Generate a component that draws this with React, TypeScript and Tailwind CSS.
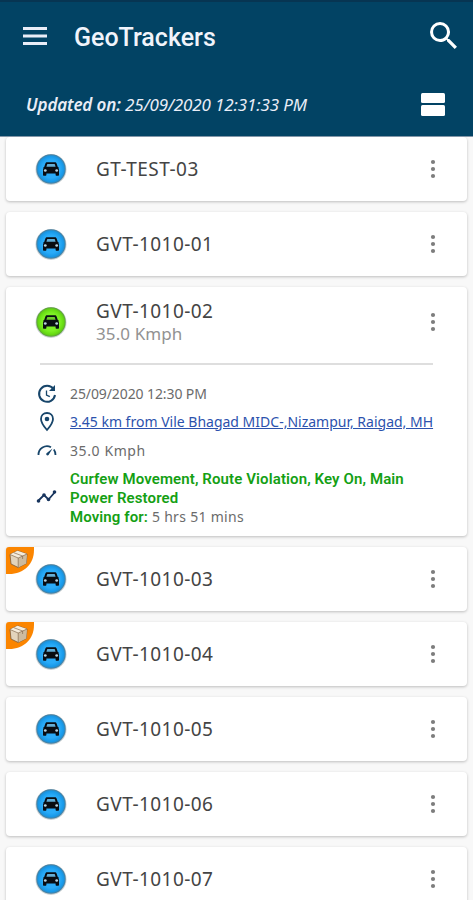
import React from 'react';

interface Vehicle {
    name: string;
    parcel?: boolean;
}

const firstVehicles: Vehicle[] = [
    { name: 'GT-TEST-03' },
    { name: 'GVT-1010-01' },
];

const lastVehicles: Vehicle[] = [
    { name: 'GVT-1010-03', parcel: true },
    { name: 'GVT-1010-04', parcel: true },
    { name: 'GVT-1010-05' },
    { name: 'GVT-1010-06' },
    { name: 'GVT-1010-07' },
];

// Round vehicle marker: green while moving, blue otherwise
const CarBadge: React.FC<{ moving?: boolean }> = ({ moving }) => {
    const id = moving ? 'moving' : 'stopped';
    return (
        <svg viewBox="0 0 32 32" className="h-8 w-8 shrink-0">
            <defs>
                <radialGradient id={id}>
                    <stop offset="0.6" stopColor={moving ? '#7df024' : '#2aabf8'} />
                    <stop offset="0.86" stopColor={moving ? '#65d911' : '#1798e8'} />
                    <stop offset="1" stopColor={moving ? '#5c9c3c' : '#487d9b'} />
                </radialGradient>
            </defs>
            <circle cx="16" cy="16.4" r="15.5" fill="#7d8b90" opacity="0.4" />
            <circle cx="16" cy="16" r="14.7" fill={`url(#${id})`} />
            <path
                d="M12.2 9.3h7.6c1 0 1.5.4 1.8 1.3l1.2 3.3.8.3v1.3c.3.4.4.9.4 1.5v4.8c0 .6-.4 1-1 1h-1.4c-.6 0-1-.4-1-1v-1.2h-9.2v1.2c0 .6-.4 1-1 1H9c-.6 0-1-.4-1-1V17c0-.6.1-1.1.4-1.5v-1.3l.8-.3 1.2-3.3c.3-.9.8-1.3 1.8-1.3Z"
                fill="#090d12"
            />
            <path d="M12.3 11h7.4l.9 2.800h-9.2Z" fill={moving ? '#6ecb2e' : '#65aed5'} />
            <ellipse cx="10.3" cy="17.5" rx="1.4" ry="1.2" fill="#b9d2df" />
            <ellipse cx="21.7" cy="17.5" rx="1.4" ry="1.2" fill="#b9d2df" />
        </svg>
    );
};

const MenuDots: React.FC = () => (
    <svg viewBox="0 0 8 20" className="h-5 w-2 shrink-0" fill="#7d7d7d">
        <circle cx="4" cy="3" r="2.1" />
        <circle cx="4" cy="10" r="2.1" />
        <circle cx="4" cy="17" r="2.1" />
    </svg>
);

const ParcelTag: React.FC = () => (
    <svg viewBox="0 0 28 27" className="absolute left-0 top-0 h-[27px] w-7">
        <path d="M3 0h25v3C28 17 18 27 3 27H0V3a3 3 0 0 1 3-3Z" fill="#fb8500" />
        <path d="m4 7.500 7.5-3.7L21 7l-.8 9.500-8 4L5 17Z" fill="#e3d4bc" stroke="#7b5a3b" strokeWidth="0.8" />
        <path d="m4 7.500 7.5-3.7L21 7l-8.8 4Z" fill="#f6ecdb" />
        <path d="M12.2 11 21 7l-.8 9.500-8 4Z" fill="#cdbb9f" />
        <path d="m4 7.500 8.2 3.500v9.500M12.2 11 21 7M7.8 5.700l8.800 3.300v3" fill="none" stroke="#856b50" strokeWidth="0.7" />
    </svg>
);

const VehicleCard: React.FC<{ vehicle: Vehicle }> = ({ vehicle }) => (
    <div className="relative flex h-16 shrink-0 items-center rounded bg-white pl-[29px] pr-[30px] shadow-[0_1px_3px_rgba(0,0,0,0.24)]">
        {vehicle.parcel && <ParcelTag />}
        <CarBadge />
        <span className="ml-[29px] flex-1 text-[19px] leading-6 tracking-[0.45px] text-[#444]">{vehicle.name}</span>
        <MenuDots />
    </div>
);

const Header: React.FC = () => (
    <header className="h-[137px] shrink-0 border-b border-t-2 border-b-[#8296a8] border-t-[#073552] bg-[#024364] text-white">
        <div className="flex h-[70px] items-center pl-[23px] pr-4">
            <svg viewBox="0 0 24 18" className="mt-[-2px] h-[18px] w-6" fill="#e9edf7">
                <path d="M0 0h24v3H0ZM0 7.5h24v3H0ZM0 15h24v3H0Z" />
            </svg>
            <h1 className="ml-[27px] flex-1 pt-0.5 font-[Roboto,sans-serif] text-[25px] font-medium leading-8 text-[#f1f4fb]">GeoTrackers</h1>
            <svg viewBox="3 3 17.5 17.5" className="mt-[-3px] h-[27px] w-[27px]" fill="#fff">
                <path d="M15.5 14h-.79l-.28-.27A6.471 6.471 0 0 0 16 9.5 6.5 6.5 0 1 0 9.5 16c1.61 0 3.09-.59 4.23-1.57l.27.28v.79l5 4.99L20.49 19l-4.99-5zm-6 0C7.01 14 5 11.99 5 9.5S7.01 5 9.5 5 14 7.01 14 9.5 11.99 14 9.5 14z" />
            </svg>
        </div>
        <div className="flex h-[64px] items-center justify-between pl-[26px] pr-7">
            <p className="pt-px text-[17px] italic leading-6 tracking-[-0.13px] text-[#e9edf7]">
                <span className="font-semibold">Updated on:</span> 25/09/2020 12:31:33 PM
            </p>
            <div className="flex w-6 flex-col gap-0.5">
                <div className="h-[10.5px] rounded-[1.5px] bg-white" />
                <div className="h-[10.5px] rounded-[1.5px] bg-white" />
            </div>
        </div>
    </header>
);

const ActiveVehicleCard: React.FC = () => (
    <div className="h-[249px] shrink-0 rounded bg-white pl-[29px] pr-[30px] shadow-[0_1px_3px_rgba(0,0,0,0.24)]">
        <div className="flex h-[76px] items-center pb-1.5">
            <CarBadge moving />
            <div className="ml-[29px] flex-1">
                <div className="text-[19px] leading-6 tracking-[0.45px] text-[#444]">GVT-1010-02</div>
                <div className="text-[17px] leading-[22px] tracking-[0.1px] text-[#929292]">35.0 Kmph</div>
            </div>
            <MenuDots />
        </div>
        <div className="ml-[5px] mr-1 h-[1.5px] bg-[#dedede]" />
        <div className="grid grid-cols-[34px_1fr] whitespace-nowrap pl-px pt-3.5 text-[14px] text-[#6b6b6b]">
            <svg viewBox="0 0 22 22" className="mt-1 h-[22px] w-[22px]" fill="none" stroke="#17456a" strokeWidth="2">
                <path d="M17.5 6A8 8 0 1 0 19 12" />
                <path d="M19 2v6h-6Z" fill="#17456a" stroke="none" />
                <path d="M10.5 7.5V12l3.3 1.7" strokeWidth="1.3" />
            </svg>
            <p className="pt-px leading-[27px] tracking-[-0.1px]">25/09/2020 12:30 PM</p>
            <svg viewBox="0 0 22 22" className="mt-1 h-[22px] w-[22px]">
                <path d="M11 2C7.5 2 5 4.6 5 8c0 4.2 6 11 6 11s6-6.8 6-11c0-3.4-2.5-6-6-6Z" fill="none" stroke="#17456a" strokeWidth="1.8" />
                <circle cx="11" cy="8" r="2.3" fill="#17456a" />
            </svg>
            <p className="leading-[29px] text-[#2c52ad] underline">3.45 km from Vile Bhagad MIDC-,Nizampur, Raigad, MH</p>
            <svg viewBox="0 0 22 22" className="mt-1 h-[22px] w-[22px]" fill="none" stroke="#17456a" strokeWidth="1.8">
                <path d="M2.5 15A8.5 8.5 0 0 1 15 7.2M17.8 9.500a8.500 8.500 0 0 1 1.700 5.500" />
                <path d="m16.5 8.500-6 4.700c-1 1.600.8 2.900 2.100 1.800Z" fill="#17456a" stroke="none" />
            </svg>
            <p className="pt-px leading-[28px] tracking-[0.6px]">35.0 Kmph</p>
            <svg viewBox="0 0 22 22" className="mt-[21px] h-[22px] w-[22px]" fill="#17345d">
                <path d="m2 15 6-6 4.5 4.500L19 6" fill="none" stroke="#17345d" strokeWidth="1.8" />
                <circle cx="2.5" cy="15" r="1.8" />
                <circle cx="8" cy="9" r="1.8" />
                <circle cx="12.5" cy="13.5" r="1.8" />
                <circle cx="18.5" cy="6" r="1.8" />
            </svg>
            <div className="pt-[5px] font-[Roboto,sans-serif] text-[15px] leading-[19px] tracking-[0.11px]">
                <p className="font-semibold text-[#14a014]">
                    Curfew Movement, Route Violation, Key On, Main
                    <br />
                    Power Restored
                </p>
                <p className="mt-[-1px]">
                    <span className="font-semibold text-[#14a014]">Moving for:</span>{' '}
                    <span className="font-['Noto_Sans',sans-serif] text-[14px] tracking-[0.3px]">5 hrs 51 mins</span>
                </p>
            </div>
        </div>
    </div>
);

const App: React.FC = () => {
    return (
        <div className="flex h-[900px] w-[473px] flex-col overflow-hidden bg-[#f8f8f8] font-['Noto_Sans',sans-serif]">
            <Header />
            <main className="flex min-h-0 flex-1 flex-col gap-[11px] overflow-hidden px-1.5">
                {firstVehicles.map(vehicle => (
                    <VehicleCard key={vehicle.name} vehicle={vehicle} />
                ))}
                <ActiveVehicleCard />
                {lastVehicles.map(vehicle => (
                    <VehicleCard key={vehicle.name} vehicle={vehicle} />
                ))}
            </main>
        </div>
    );
};

export default App;
